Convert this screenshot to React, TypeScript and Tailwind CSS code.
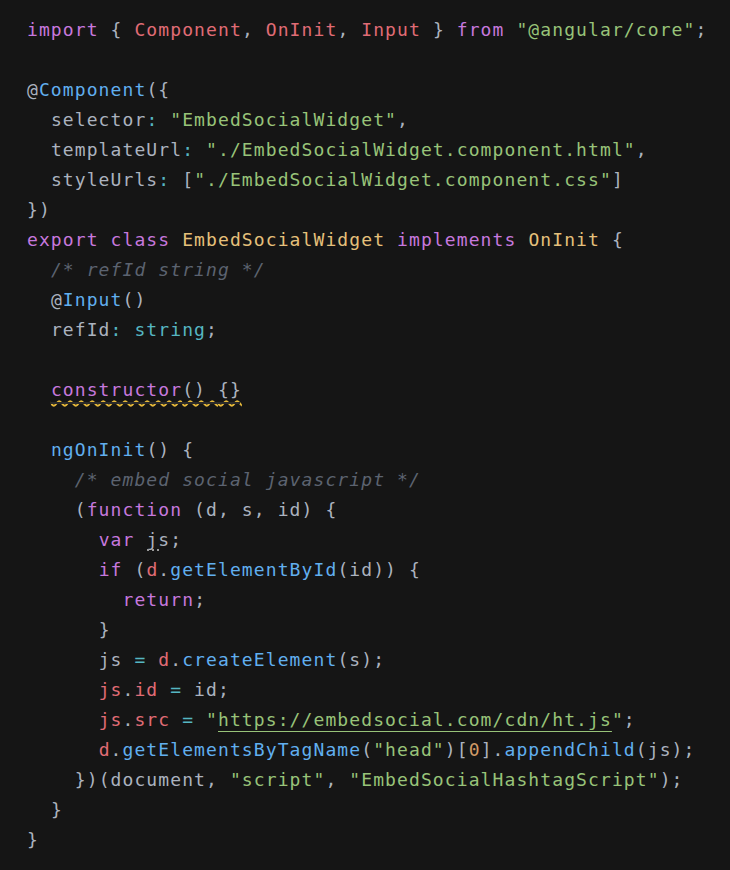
import React from "react";

const P = "text-[#c678dd]"; // purple
const R = "text-[#e06c75]"; // red
const G = "text-[#98c379]"; // green
const B = "text-[#61afef]"; // blue
const Y = "text-[#e5c07b]"; // yellow
const C = "text-[#56b6c2]"; // cyan
const T = "text-[#abb2bf]"; // plain
const O = "text-[#d19a66]"; // orange
const M = "text-[#5c6370] italic"; // comment

function L({ indent = 0, children }: { indent?: number; children?: React.ReactNode }) {
  return (
    <div className="h-[30px] leading-[30px] whitespace-pre">
      {"  ".repeat(indent)}
      {children}
    </div>
  );
}

function S({ c, children }: { c: string; children: React.ReactNode }) {
  return <span className={c}>{children}</span>;
}

export default function App() {
  return (
    <div className="w-[730px] h-[870px] bg-[#151515] pl-[27px] pt-[15px] text-[18px] tracking-[1.1px] text-[#abb2bf] font-['DejaVu_Sans_Mono',monospace]">
      <L>
        <S c={P}>import</S> <S c={T}>{"{"}</S> <S c={R}>Component</S>, <S c={R}>OnInit</S>, <S c={R}>Input</S>{" "}
        <S c={T}>{"}"}</S> <S c={P}>from</S> <S c={G}>"@angular/core"</S>;
      </L>
      <L />
      <L>
        @<S c={B}>Component</S>({"{"}
      </L>
      <L indent={1}>
        selector<S c={C}>:</S> <S c={G}>"EmbedSocialWidget"</S>,
      </L>
      <L indent={1}>
        templateUrl<S c={C}>:</S> <S c={G}>"./EmbedSocialWidget.component.html"</S>,
      </L>
      <L indent={1}>
        styleUrls<S c={C}>:</S> [<S c={G}>"./EmbedSocialWidget.component.css"</S>]
      </L>
      <L>{"})"}</L>
      <L>
        <S c={P}>export</S> <S c={P}>class</S> <S c={Y}>EmbedSocialWidget</S> <S c={P}>implements</S>{" "}
        <S c={Y}>OnInit</S> {"{"}
      </L>
      <L indent={1}>
        <S c={M}>/* refId string */</S>
      </L>
      <L indent={1}>
        @<S c={B}>Input</S>()
      </L>
      <L indent={1}>
        refId<S c={C}>:</S> <S c={C}>string</S>;
      </L>
      <L />
      <L indent={1}>
        <span className="relative inline-block leading-[30px]">
          <span className="underline decoration-wavy decoration-[#e5b83a] decoration-2 underline-offset-[4px]">
            <S c={P}>constructor</S>() {"{}"}
          </span>
          <span className="absolute left-0 right-[2px] top-[27px] h-[2px] bg-[#2a2a2a]" />
        </span>
      </L>
      <L />
      <L indent={1}>
        <S c={B}>ngOnInit</S>() {"{"}
      </L>
      <L indent={2}>
        <S c={M}>/* embed social javascript */</S>
      </L>
      <L indent={2}>
        (<S c={P}>function</S> (d, s, id) {"{"}
      </L>
      <L indent={3}>
        <S c={P}>var</S>{" "}
        <span className="relative inline-block">
          js
          <span className="absolute left-[1px] top-[24px] flex gap-[3px]">
            <span className="w-[2px] h-[2px] bg-[#9a9a9a]" />
            <span className="w-[2px] h-[2px] bg-[#9a9a9a]" />
            <span className="w-[2px] h-[2px] bg-[#9a9a9a]" />
          </span>
        </span>
        ;
      </L>
      <L indent={3}>
        <S c={P}>if</S> (<S c={R}>d</S>.<S c={B}>getElementById</S>(id)) {"{"}
      </L>
      <L indent={4}>
        <S c={P}>return</S>;
      </L>
      <L indent={3}>{"}"}</L>
      <L indent={3}>
        js <S c={C}>=</S> <S c={R}>d</S>.<S c={B}>createElement</S>(s);
      </L>
      <L indent={3}>
        <S c={R}>js</S>.<S c={R}>id</S> <S c={C}>=</S> id;
      </L>
      <L indent={3}>
        <S c={R}>js</S>.<S c={R}>src</S> <S c={C}>=</S> <S c={G}>"</S>
        <span className={G + " underline decoration-[#98c379] underline-offset-[5px]"}>
          https://embedsocial.com/cdn/ht.js
        </span>
        <S c={G}>"</S>;
      </L>
      <L indent={3}>
        <S c={R}>d</S>.<S c={B}>getElementsByTagName</S>(<S c={G}>"head"</S>)[<S c={O}>0</S>].
        <S c={B}>appendChild</S>(js);
      </L>
      <L indent={2}>
        {"})"}(document, <S c={G}>"script"</S>, <S c={G}>"EmbedSocialHashtagScript"</S>);
      </L>
      <L indent={1}>{"}"}</L>
      <L>{"}"}</L>
    </div>
  );
}
